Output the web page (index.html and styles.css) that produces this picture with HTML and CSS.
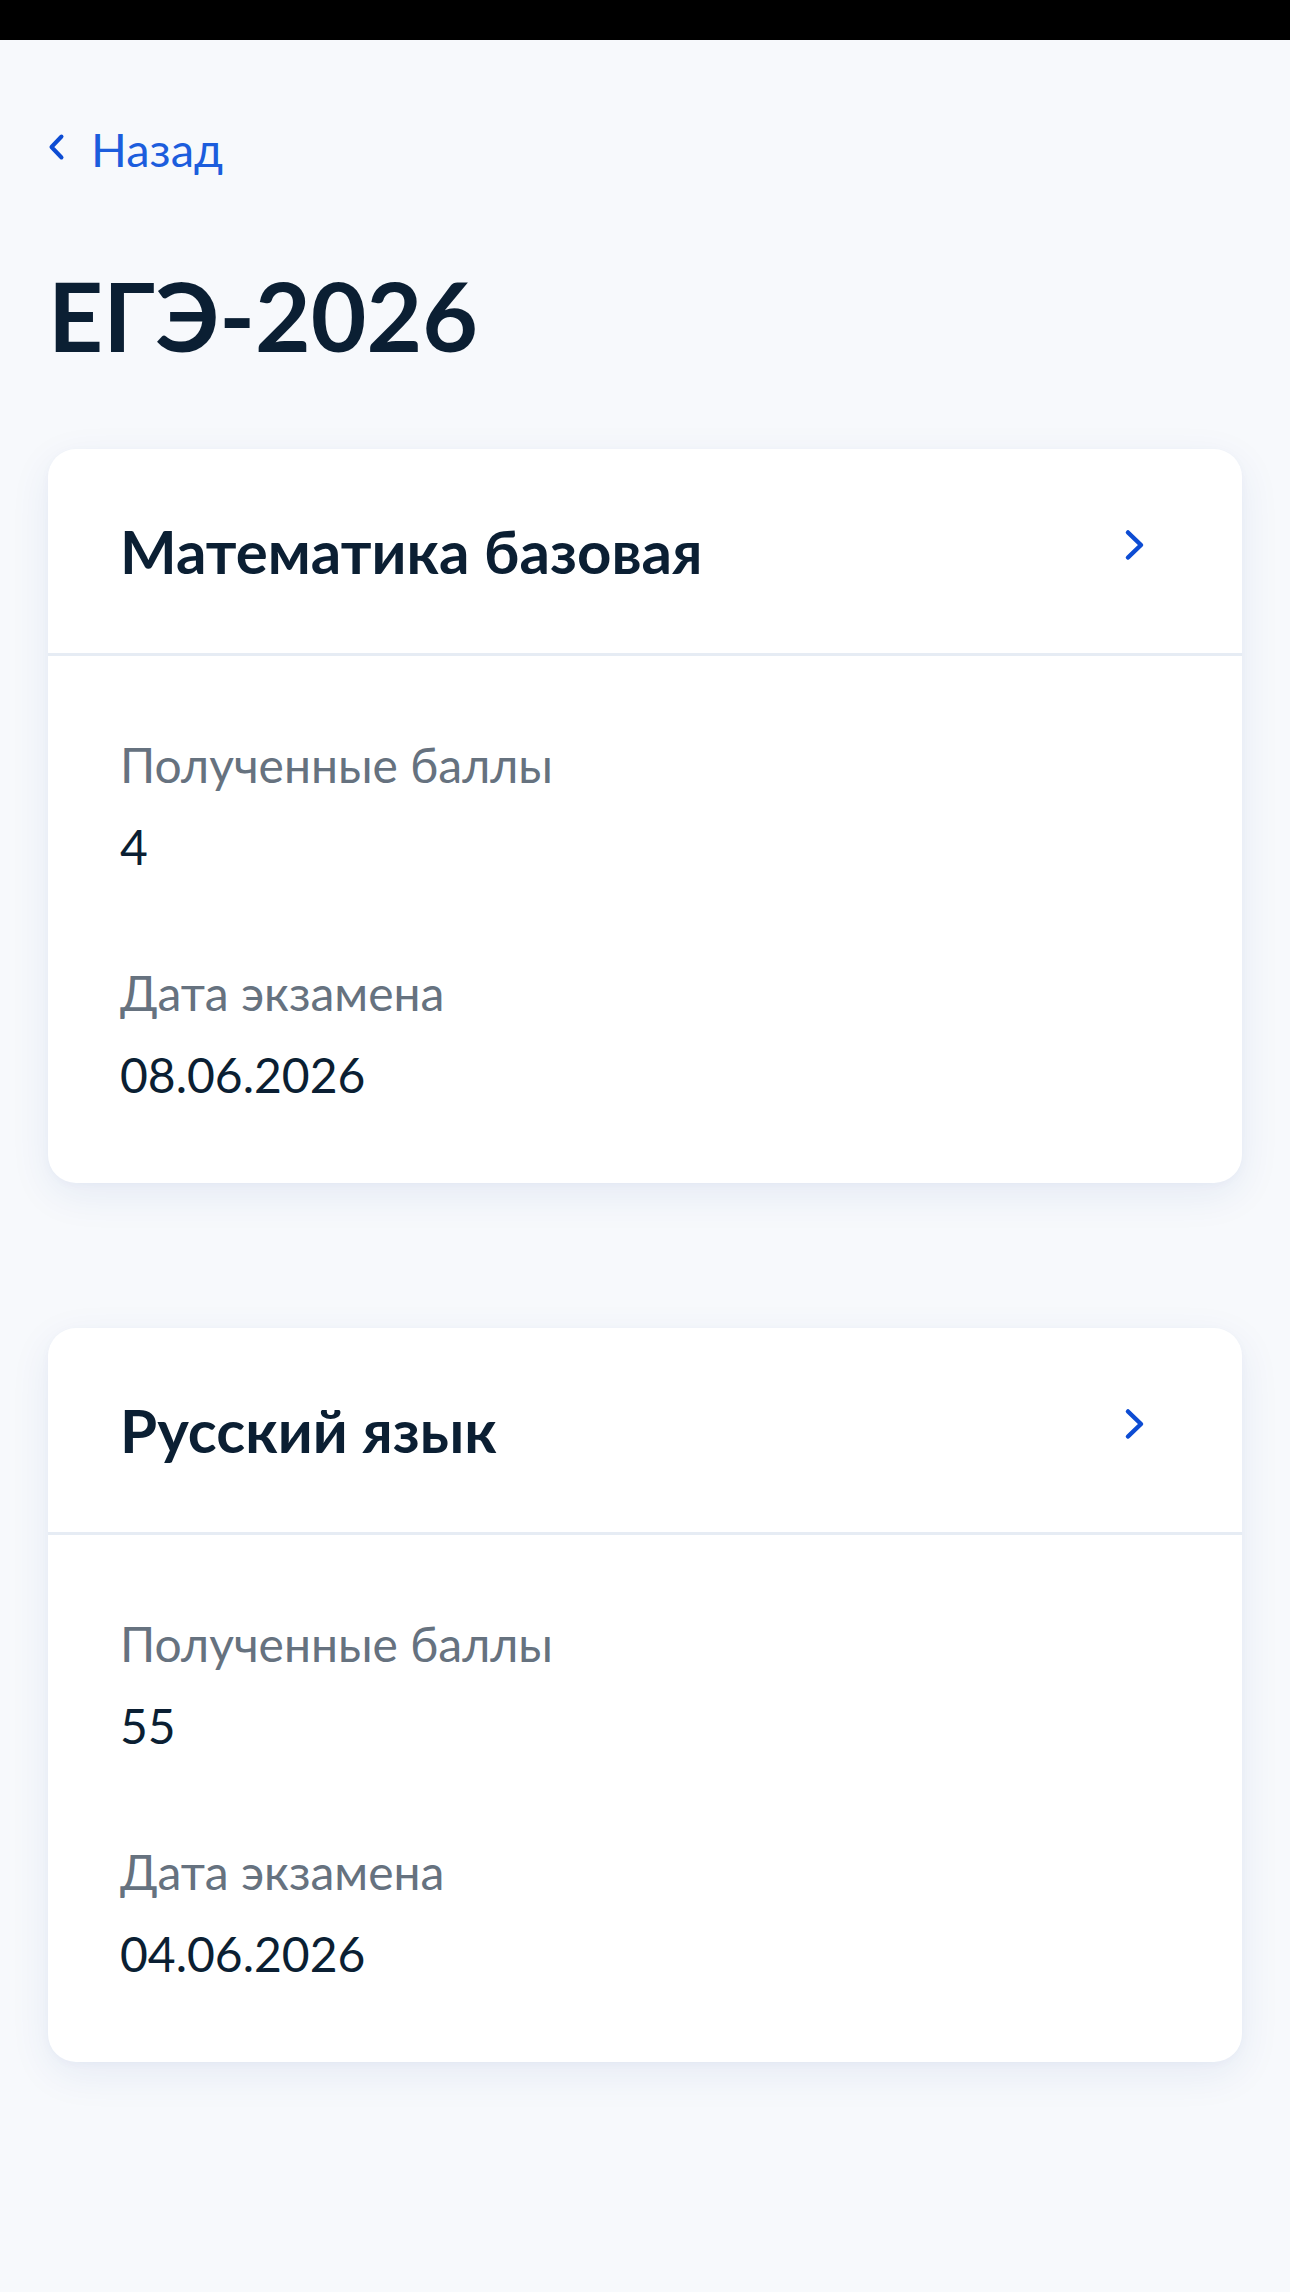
FILE: index.html
```html
<!DOCTYPE html>
<html lang="ru">
<head>
<meta charset="utf-8">
<title>ЕГЭ-2026</title>
<link rel="stylesheet" href="styles.css">
</head>
<body>
<div class="statusbar"></div>
<main class="page">
  <a class="back" href="#">
    <svg class="back-icon" width="17" height="28" viewBox="0 0 17 28"><path d="M13.5 3.5 L3.5 14 L13.5 24.5" fill="none" stroke="#0d4cd3" stroke-width="4" stroke-linecap="round" stroke-linejoin="round"/></svg>
    <span class="back-text">Назад</span>
  </a>
  <h1 class="title">ЕГЭ-2026</h1>

  <section class="card">
    <div class="card-head">
      <h2 class="card-title">Математика базовая</h2>
      <svg class="chev" width="22" height="32" viewBox="0 0 22 32"><path d="M4 3.5 L17 16 L4 28.5" fill="none" stroke="#0d4cd3" stroke-width="4.5" stroke-linecap="round" stroke-linejoin="round"/></svg>
    </div>
    <div class="card-body">
      <div class="field">
        <div class="label">Полученные баллы</div>
        <div class="value">4</div>
      </div>
      <div class="field">
        <div class="label">Дата экзамена</div>
        <div class="value">08.06.2026</div>
      </div>
    </div>
  </section>

  <section class="card">
    <div class="card-head">
      <h2 class="card-title">Русский язык</h2>
      <svg class="chev" width="22" height="32" viewBox="0 0 22 32"><path d="M4 3.5 L17 16 L4 28.5" fill="none" stroke="#0d4cd3" stroke-width="4.5" stroke-linecap="round" stroke-linejoin="round"/></svg>
    </div>
    <div class="card-body">
      <div class="field">
        <div class="label">Полученные баллы</div>
        <div class="value">55</div>
      </div>
      <div class="field">
        <div class="label">Дата экзамена</div>
        <div class="value">04.06.2026</div>
      </div>
    </div>
  </section>
</main>
</body>
</html>
```

FILE: styles.css
```css
* { box-sizing: border-box; }
html, body {
  margin: 0;
  padding: 0;
}
body {
  background: #f7f9fc;
  font-family: Lato, "Open Sans", "Noto Sans", sans-serif;
  color: #0b1f33;
  min-height: 2292px;
}
.statusbar {
  height: 40px;
  background: #000;
}
.page {
  padding: 0 48px 80px;
}
.back {
  display: flex;
  align-items: center;
  gap: 26px;
  margin-top: 81px;
  height: 56px;
  text-decoration: none;
}
.back-icon {
  display: block;
  margin-bottom: 4px;
}
.back-text {
  font-size: 47px;
  line-height: 56px;
  color: #1c5ddd;
}
.title {
  margin: 80px 0 77px;
  font-size: 96px;
  line-height: 115px;
  font-weight: 700;
  color: #0b1f33;
}
.card {
  background: #fff;
  border-radius: 28px;
  box-shadow: 0 12px 40px rgba(30, 70, 150, 0.08), 0 2px 8px rgba(30, 70, 150, 0.03);
}
.card + .card {
  margin-top: 145px;
}
.card-head {
  height: 207px;
  display: flex;
  align-items: center;
  justify-content: space-between;
  padding: 0 96px 0 72px;
  border-bottom: 3px solid #e6ecf4;
}
.card-title {
  margin: 0;
  font-size: 60px;
  line-height: 72px;
  font-weight: 700;
  color: #0b1f33;
}
.chev {
  display: block;
  margin-bottom: 12px;
}
.card-body {
  display: flex;
  flex-direction: column;
  gap: 64px;
  padding: 68px 72px 67px;
}
.label {
  font-size: 48px;
  line-height: 82px;
  color: #66727f;
}
.value {
  font-size: 48px;
  line-height: 82px;
  color: #0b1f33;
}
```
